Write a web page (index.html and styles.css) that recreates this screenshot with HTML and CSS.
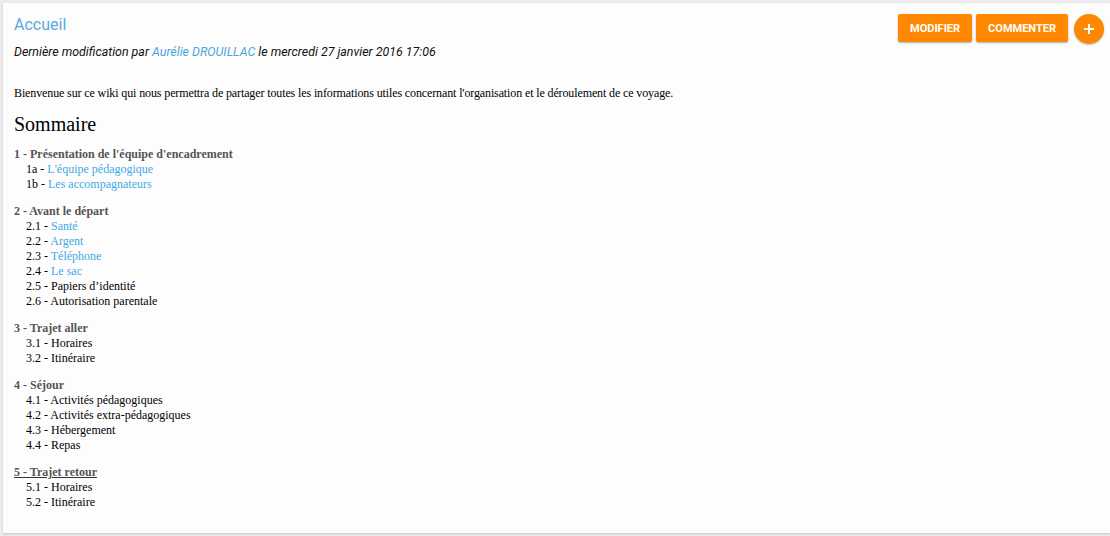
FILE: index.html
```html
<!DOCTYPE html>
<html lang="fr">
<head>
<meta charset="utf-8">
<title>Accueil</title>
<link rel="stylesheet" href="styles.css">
</head>
<body>
<div class="card">
  <div class="header">
    <div class="titles">
      <h1 class="title">Accueil</h1>
      <p class="meta">Dernière modification par <a class="link" href="#">Aurélie DROUILLAC</a> le mercredi 27 janvier 2016 17:06</p>
    </div>
    <div class="actions">
      <button class="btn">Modifier</button>
      <button class="btn">Commenter</button>
      <button class="fab" aria-label="Ajouter"><svg width="12" height="12" viewBox="0 0 12 12"><path d="M6 1v10M1 6h10" stroke="#fff" stroke-width="2"/></svg></button>
    </div>
  </div>
  <div class="content">
    <p class="intro">Bienvenue sur ce wiki qui nous permettra de partager toutes les informations utiles concernant l'organisation et le déroulement de ce voyage.</p>
    <h2 class="summary">Sommaire</h2>
    <div class="section">
      <div class="sec-title">1 - Présentation de l'équipe d'encadrement</div>
      <div class="item">1a - <a class="link" href="#">L'équipe pédagogique</a></div>
      <div class="item">1b - <a class="link" href="#">Les accompagnateurs</a></div>
    </div>
    <div class="section">
      <div class="sec-title">2 - Avant le départ</div>
      <div class="item">2.1 - <a class="link" href="#">Santé</a></div>
      <div class="item">2.2 - <a class="link" href="#">Argent</a></div>
      <div class="item">2.3 - <a class="link" href="#">Téléphone</a></div>
      <div class="item">2.4 - <a class="link" href="#">Le sac</a></div>
      <div class="item">2.5 - Papiers d’identité</div>
      <div class="item">2.6 - Autorisation parentale</div>
    </div>
    <div class="section">
      <div class="sec-title">3 - Trajet aller</div>
      <div class="item">3.1 - Horaires</div>
      <div class="item">3.2 - Itinéraire</div>
    </div>
    <div class="section">
      <div class="sec-title">4 - Séjour</div>
      <div class="item">4.1 - Activités pédagogiques</div>
      <div class="item">4.2 - Activités extra-pédagogiques</div>
      <div class="item">4.3 - Hébergement</div>
      <div class="item">4.4 - Repas</div>
    </div>
    <div class="section">
      <div class="sec-title"><span class="underline">5 - Trajet retour</span></div>
      <div class="item">5.1 - Horaires</div>
      <div class="item">5.2 - Itinéraire</div>
    </div>
  </div>
</div>
</body>
</html>
```
FILE: styles.css
```css
html, body {
  margin: 0;
  padding: 0;
  height: 536px;
  overflow: hidden;
}
body {
  background: #ececec;
  font-family: "Liberation Serif", "Times New Roman", serif;
  color: #000;
}
.card {
  margin: 3px 0 0 3px;
  height: 530px;
  box-sizing: border-box;
  background: #fdfdfd;
  box-shadow: 0 1px 2px rgba(0,0,0,0.18);
  padding: 8px 6px 0 11px;
}
.header {
  display: flex;
  justify-content: space-between;
  align-items: flex-start;
}
.title {
  margin: 1px 0 0;
  font-family: Roboto, "Liberation Sans", sans-serif;
  font-weight: 400;
  font-size: 16px;
  line-height: 26px;
  color: #5aaade;
}
.meta {
  margin: 6px 0 0;
  font-family: Roboto, "Liberation Sans", sans-serif;
  font-style: italic;
  font-size: 12.4px;
  line-height: 15px;
  color: #111;
}
.link {
  color: #3fa9e6;
  text-decoration: none;
}
.meta .link {
  color: #4aa7dc;
}
.actions {
  display: flex;
  align-items: flex-start;
  gap: 4px;
  padding-top: 3px;
}
.btn {
  height: 28px;
  padding: 0 12px;
  border: none;
  border-radius: 2px;
  background: #ff8800;
  color: #fff;
  font-family: Roboto, "Liberation Sans", sans-serif;
  font-weight: 700;
  font-size: 11px;
  text-transform: uppercase;
  box-shadow: 0 1px 2px rgba(0,0,0,0.3);
  cursor: pointer;
}
.fab {
  width: 30px;
  height: 30px;
  margin-left: 2px;
  border: none;
  border-radius: 50%;
  background: #ff8800;
  box-shadow: 0 1px 2px rgba(0,0,0,0.25);
  display: flex;
  align-items: center;
  justify-content: center;
  padding: 0;
}
.intro {
  margin: 27px 0 0;
  font-size: 12px;
  line-height: 15px;
  letter-spacing: -0.12px;
}
.summary {
  margin: 11px 0 11px;
  font-weight: 400;
  font-size: 20px;
  line-height: 24px;
}
.section {
  font-size: 12px;
  line-height: 15px;
  margin-bottom: 12px;
}
.sec-title {
  font-weight: 700;
  color: #555;
}
.underline {
  text-decoration: underline;
  text-decoration-color: #333;
}
.item {
  padding-left: 12px;
}
```
